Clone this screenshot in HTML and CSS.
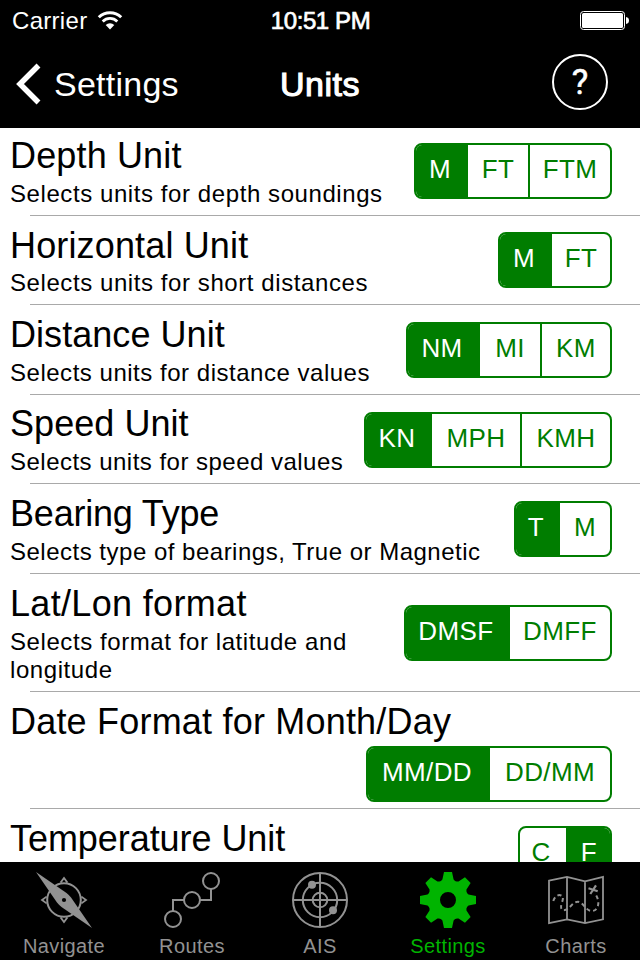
FILE: index.html
```html
<!DOCTYPE html>
<html lang="en">
<head>
<meta charset="utf-8">
<title>Units</title>
<link rel="stylesheet" href="styles.css">
</head>
<body>
<div class="screen">
  <header class="top">
    <div class="status">
      <div class="status-left">
        <span class="carrier">Carrier</span>
        <svg class="wifi" width="26" height="20" viewBox="0 0 26 20">
          <path d="M1.8 6.2A16 16 0 0 1 24.2 6.2" fill="none" stroke="#fff" stroke-width="3"/>
          <path d="M5.7 10.4A10.5 10.5 0 0 1 20.3 10.4" fill="none" stroke="#fff" stroke-width="2.8"/>
          <path d="M13 18.4L8.7 14A6.3 6.3 0 0 1 17.3 14Z" fill="#fff"/>
        </svg>
      </div>
      <span class="clock">10:51 PM</span>
      <svg class="battery" width="50" height="20" viewBox="0 0 50 20">
        <rect x="0.5" y="0.5" width="44" height="18" rx="3" fill="none" stroke="#fff"/>
        <rect x="2" y="2" width="41" height="15" rx="1.5" fill="#fff"/>
        <path d="M46 6C48 6.3 49 7.5 49 9.5S48 12.7 46 13Z" fill="#fff"/>
      </svg>
    </div>
    <nav class="navbar">
      <a class="back">
        <svg width="26" height="42" viewBox="0 0 26 42"><path d="M23.5 2.5L5 21L23.5 39.5" fill="none" stroke="#fff" stroke-width="5.5"/></svg>
        <span>Settings</span>
      </a>
      <h1 class="heading">Units</h1>
      <button class="help">?</button>
    </nav>
  </header>

  <main class="list">
    <section class="row short-top">
      <div class="info"><h2>Depth Unit</h2><p>Selects units for depth soundings</p></div>
      <div class="seg depth"><span class="on">M</span><span>FT</span><span>FTM</span></div>
    </section>
    <section class="row short-top">
      <div class="info"><h2>Horizontal Unit</h2><p>Selects units for short distances</p></div>
      <div class="seg horizontal"><span class="on">M</span><span>FT</span></div>
    </section>
    <section class="row tall distance-row">
      <div class="info"><h2>Distance Unit</h2><p>Selects units for distance values</p></div>
      <div class="seg distance"><span class="on">NM</span><span>MI</span><span>KM</span></div>
    </section>
    <section class="row speed-row">
      <div class="info"><h2>Speed Unit</h2><p>Selects units for speed values</p></div>
      <div class="seg speed"><span class="on">KN</span><span>MPH</span><span>KMH</span></div>
    </section>
    <section class="row tall bearing-row">
      <div class="info"><h2>Bearing Type</h2><p>Selects type of bearings, True or Magnetic</p></div>
      <div class="seg bearing"><span class="on">T</span><span>M</span></div>
    </section>
    <section class="row two-line">
      <div class="info"><h2>Lat/Lon format</h2><p>Selects format for latitude and longitude</p></div>
      <div class="seg latlon"><span class="on">DMSF</span><span>DMFF</span></div>
    </section>
    <section class="row stacked">
      <div class="info"><h2>Date Format for Month/Day</h2></div>
      <div class="seg date"><span class="on">MM/DD</span><span>DD/MM</span></div>
    </section>
    <section class="row temperature-row">
      <div class="info"><h2>Temperature Unit</h2></div>
      <div class="seg temperature"><span>C</span><span class="on">F</span></div>
    </section>
  </main>

  <footer class="tabs">
    <a class="tab">
      <svg viewBox="-28 -28 56 56">
        <circle r="16.8" fill="none" stroke="currentColor" stroke-width="2"/>
        <g fill="none" stroke="currentColor" stroke-width="1.8">
          <path d="M-3.4-17.4L0-22L3.4-17.4"/>
          <path d="M-3.4-17.4L0-22L3.4-17.4" transform="rotate(90)"/>
          <path d="M-3.4-17.4L0-22L3.4-17.4" transform="rotate(180)"/>
          <path d="M-3.4-17.4L0-22L3.4-17.4" transform="rotate(270)"/>
        </g>
        <path d="M-28-28L2.5-7Q5-5 7-2.5L28 28L-2.5 7Q-5 5-7 2.5Z" fill="currentColor"/>
        <circle r="2.1" fill="#000"/>
      </svg>
      <span>Navigate</span>
    </a>
    <a class="tab">
      <svg viewBox="-28 -28 56 56" fill="none" stroke="currentColor" stroke-width="2">
        <circle cx="-19" cy="19" r="8"/><circle r="8"/><circle cx="19" cy="-19" r="8"/>
        <path d="M-19 11V0H-8M8 0H19V-11"/>
      </svg>
      <span>Routes</span>
    </a>
    <a class="tab">
      <svg viewBox="-28 -28 56 56">
        <g fill="none" stroke="currentColor" stroke-width="2">
          <circle r="27"/><circle r="17.2"/><circle r="7.3"/>
          <path d="M-27 0H27M0-27V27"/>
        </g>
        <circle cx="-8" cy="-15.2" r="4" fill="currentColor"/>
        <circle cx="13" cy="10.3" r="4" fill="currentColor"/>
      </svg>
      <span>AIS</span>
    </a>
    <a class="tab active">
      <svg viewBox="-28 -28 56 56">
        <g fill="currentColor">
          <circle r="14" fill="none" stroke="currentColor" stroke-width="12"/>
          <path id="tooth" d="M-4-28H4L5.6-20.5L8-18H-8L-5.6-20.5Z"/>
          <use href="#tooth" transform="rotate(45)"/>
          <use href="#tooth" transform="rotate(90)"/>
          <use href="#tooth" transform="rotate(135)"/>
          <use href="#tooth" transform="rotate(180)"/>
          <use href="#tooth" transform="rotate(225)"/>
          <use href="#tooth" transform="rotate(270)"/>
          <use href="#tooth" transform="rotate(315)"/>
        </g>
      </svg>
      <span>Settings</span>
    </a>
    <a class="tab">
      <svg viewBox="0 0 56 56" fill="none" stroke="currentColor">
        <path d="M1 8.7L19 4.9L37 9.3L55 4.9V47.3L37 51.1L19 47.3L1 51.1ZM19 4.9V47.3M37 9.3V51.1" stroke-width="1.8"/>
        <path d="M5.3 29C6.5 25 9.5 22.5 12.3 23.2C16 24.2 15 27.5 14 30.5C12.5 34.5 12.5 38 15.5 38.2C21.5 38.5 24 29.8 30 29.8C35 29.8 38 39.2 44 39C50 38.8 53 30 47.3 22" stroke-width="2" stroke-dasharray="4 3"/>
        <path d="M40.5 16.2L49.7 19.3M42.3 22L48 13.3" stroke-width="2.2"/>
      </svg>
      <span>Charts</span>
    </a>
  </footer>
</div>
</body>
</html>
```
FILE: styles.css
```css
* { box-sizing: border-box; }
body {
  margin: 0;
  background: #fff;
  font-family: "Liberation Sans", Arial, sans-serif;
  font-kerning: normal;
  color: #000;
}
.screen {
  width: 640px;
  height: 960px;
  display: flex;
  flex-direction: column;
  overflow: hidden;
}
.top {
  flex: none;
  position: relative;
  z-index: 1;
  height: 128px;
  background: #000;
  color: #fff;
}
.status {
  height: 40px;
  display: grid;
  grid-template-columns: 1fr auto 1fr;
  align-items: center;
  padding: 0 11px 0 12px;
  font-size: 24px;
}
.status-left { display: flex; align-items: center; gap: 10px; }
.carrier { letter-spacing: 0.3px; padding-top: 2px; }
.wifi { margin: 2px 0 0 0; }
.clock { padding-top: 2px; letter-spacing: -0.4px; -webkit-text-stroke: 0.7px #fff; }
.battery { justify-self: end; margin: 2px -1px 0 0; }
.navbar {
  height: 88px;
  display: grid;
  grid-template-columns: 1fr auto 1fr;
  align-items: center;
  padding: 0 15px;
  font-size: 34px;
}
.back { display: flex; align-items: center; gap: 13px; letter-spacing: 0.25px; }
.heading {
  margin: 0;
  font-size: 34px;
  font-weight: 400;
  letter-spacing: 0.5px;
  -webkit-text-stroke: 1.1px #fff;
}
.help {
  justify-self: end;
  width: 56px;
  height: 56px;
  margin: 0 17px 4px 0;
  padding: 2px 0 0;
  border: 2px solid #fff;
  border-radius: 50%;
  background: none;
  color: #fff;
  font: 35px/50px Roboto, sans-serif;
  -webkit-text-stroke: 0.5px #fff;
}
.list {
  flex: 1;
  min-height: 0;
  overflow: hidden;
  margin-top: -1px;
  background: #fff;
}
.row {
  display: flex;
  justify-content: space-between;
  align-items: flex-start;
  height: 89px;
  padding: 1px 28px 0 10px;
  background: linear-gradient(#a9a9a9, #a9a9a9) 30px 100% / 100% 1px no-repeat;
}
.row.short-top { padding-top: 0; }
.row.tall { height: 90px; }
.row.two-line { height: 118px; }
.row.stacked { height: 117px; flex-direction: column; justify-content: flex-start; }
.info { padding-top: 7px; }
.short-top + .short-top .info { padding-top: 8px; }
.short-top + .short-top p { margin-top: 1px; }
.two-line .info { width: 360px; }
h2 {
  margin: 0;
  font-size: 36px;
  font-weight: 400;
  line-height: 44px;
  letter-spacing: 0.15px;
  white-space: nowrap;
}
p {
  margin: 2px 0 0;
  font-size: 24px;
  line-height: 28px;
  letter-spacing: 0.58px;
}
.distance-row h2, .speed-row h2 { letter-spacing: 0.05px; }
.distance-row p { letter-spacing: 0.52px; }
.speed-row p { letter-spacing: 0.48px; }
.speed-row .info { padding-top: 6px; }
.bearing-row h2 { letter-spacing: -0.2px; }
.bearing-row p { letter-spacing: 0.5px; }
.two-line h2 { letter-spacing: 0.33px; }
.stacked h2 { letter-spacing: 0.2px; }
.temperature-row h2 { letter-spacing: -0.06px; }
.seg {
  flex: none;
  display: grid;
  height: 56px;
  margin-top: 16px;
  border: 2px solid #007d00;
  border-radius: 8px;
  overflow: hidden;
  color: #007d00;
  font-size: 26px;
  line-height: 48px;
  letter-spacing: 0.4px;
  text-align: center;
}
.seg span + span { border-left: 2px solid #007d00; }
.seg .on { background: #007d00; color: #fff; padding-right: 4px; }
.seg .on + span { border-left: 0; }
.depth { grid-template-columns: 52px 60px 82px; }
.horizontal { grid-template-columns: 52px 58px; }
.distance { grid-template-columns: 72px 60px 70px; }
.speed { grid-template-columns: 66px 88px 90px; }
.bearing { grid-template-columns: 44px 50px; }
.latlon { grid-template-columns: 104px 100px; }
.date { grid-template-columns: 122px 120px; }
.temperature { grid-template-columns: 46px 44px; }
.temperature span:first-child { padding-right: 4px; }
.temperature .on { padding-right: 0; }
.two-line .seg { margin-top: 30px; }
.stacked .seg { align-self: flex-end; margin-top: 2px; }
.tabs {
  flex: none;
  height: 98px;
  display: grid;
  grid-template-columns: repeat(5, 128px);
  background: #000;
  color: #929292;
}
.tab {
  display: flex;
  flex-direction: column;
  align-items: center;
  padding-top: 10px;
  font-size: 20px;
  line-height: 24px;
  letter-spacing: 0.4px;
}
.tab svg { width: 56px; height: 56px; margin-bottom: 6px; }
.tab.active { color: #00b400; }
```
